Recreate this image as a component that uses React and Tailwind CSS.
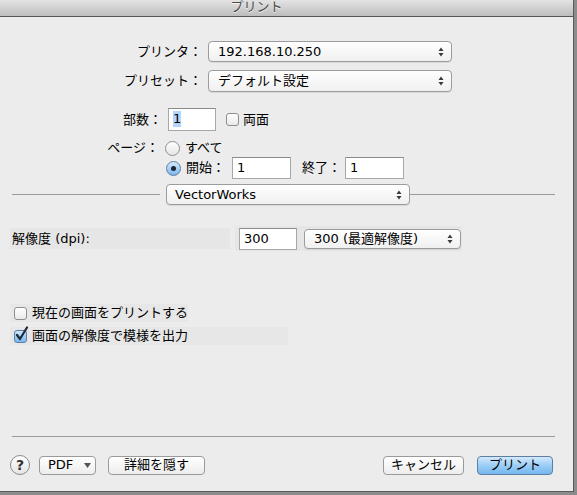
import React from 'react'

const font = "font-['DejaVu_Sans','Noto_Sans_CJK_JP',sans-serif]"

function Arrows() {
  return (
    <svg width="6" height="10" viewBox="0 0 6 10" className="shrink-0">
      <path d="M3 0.5 L5.5 4 L0.5 4 Z" fill="#3a3a3a" />
      <path d="M3 9.5 L5.5 6 L0.5 6 Z" fill="#3a3a3a" />
    </svg>
  )
}

function Popup({ label, className = '', textClass = 'pl-[9px]' }) {
  return (
    <div
      className={`flex items-center justify-between rounded-[4px] border border-[#9c9c9c] bg-gradient-to-b from-[#ffffff] to-[#f0f0f0] shadow-[0_1px_0_rgba(0,0,0,0.08)] pr-[7px] ${className}`}
    >
      <span className={`text-[13px] leading-[16px] text-black ${textClass}`}>{label}</span>
      <Arrows />
    </div>
  )
}

function Field({ value, className = '', selected = false }) {
  return (
    <div className={`bg-white border border-[#a7a7a7] border-t-[#8a8a8a] flex items-start pt-[2px] pl-[4px] ${className}`}>
      <span className={`text-[13px] leading-[16px] text-black ${selected ? 'bg-[#b5d5ff]' : ''}`}>{value}</span>
    </div>
  )
}

function Check({ checked = false }) {
  if (checked) {
    return (
      <div className="relative w-[13px] h-[13px] shrink-0">
        <div className="w-[13px] h-[13px] rounded-[3px] border border-[#5a7ea5] bg-gradient-to-b from-[#cfe6fb] to-[#7ab6ec]" />
        <svg width="14" height="16" viewBox="0 0 14 16" className="absolute left-[1px] top-[-4px]">
          <path d="M2 9 L5 13 L12 1.5" fill="none" stroke="#1b2a3c" strokeWidth="2.2" strokeLinecap="round" strokeLinejoin="round" />
        </svg>
      </div>
    )
  }
  return (
    <div className="w-[13px] h-[13px] rounded-[3px] border border-[#8e8e8e] bg-gradient-to-b from-[#ffffff] to-[#e9e9e9] shrink-0" />
  )
}

function Radio({ checked = false }) {
  if (checked) {
    return (
      <div className="w-[15px] h-[15px] rounded-full border border-[#5a7ea5] bg-gradient-to-b from-[#d6ebfc] to-[#7ab6ec] flex items-center justify-center shrink-0">
        <div className="w-[5px] h-[5px] rounded-full bg-[#1b2533]" />
      </div>
    )
  }
  return (
    <div className="w-[15px] h-[15px] rounded-full border border-[#8e8e8e] bg-gradient-to-b from-[#ffffff] to-[#e6e6e6] shrink-0" />
  )
}

function Button({ children, className = '', primary = false }) {
  return (
    <div
      className={`h-[19px] rounded-[4px] border flex items-center justify-center text-[13px] leading-[16px] text-black ${
        primary
          ? 'border-[#5e7fa3] bg-gradient-to-b from-[#d3e9fc] via-[#9ccdf5] to-[#72b7f0]'
          : 'border-[#9a9a9a] bg-gradient-to-b from-[#ffffff] to-[#ededed]'
      } ${className}`}
    >
      {children}
    </div>
  )
}

export default function App() {
  return (
    <div className={`w-[577px] h-[495px] bg-[#8c8c8c] overflow-hidden ${font}`}>
      <div className="w-[574px] h-[492px] bg-[#ececec] border-r border-b border-[#5a5a5a] flex flex-col">
        {/* Title bar */}
        <div className="h-[17px] shrink-0 bg-gradient-to-b from-[#e4e4e4] to-[#bdbdbd] border-b border-[#555555] flex items-center justify-center">
          <span className="text-[13px] leading-[14px] text-[#4a4a4a] [text-shadow:0_1px_0_#f2f2f2] -mt-[3px] ml-[-60px]">プリント</span>
        </div>

        {/* Printer / preset */}
        <div className="flex items-center mt-[24px] h-[21px]">
          <div className="w-[208px] text-right text-[13px] leading-[16px] pr-[6px]">プリンタ：</div>
          <Popup label="192.168.10.250" className="w-[244px] h-[21px]" />
        </div>
        <div className="flex items-center mt-[8px] h-[22px]">
          <div className="w-[208px] text-right text-[13px] leading-[16px] pr-[6px]">プリセット：</div>
          <Popup label="デフォルト設定" className="w-[244px] h-[22px]" />
        </div>

        {/* Copies */}
        <div className="flex items-center mt-[16px] h-[23px]">
          <div className="w-[168px] text-right text-[13px] leading-[16px] pr-[6px]">部数：</div>
          <Field value="1" selected className="w-[48px] h-[23px]" />
          <div className="ml-[10px] flex items-center gap-[4px]">
            <Check />
            <span className="text-[13px] leading-[16px]">両面</span>
          </div>
        </div>

        {/* Pages */}
        <div className="flex items-center mt-[9px] h-[16px]">
          <div className="w-[165px] text-right text-[13px] leading-[16px] pr-[6px]">ページ：</div>
          <Radio />
          <span className="ml-[5px] text-[13px] leading-[16px]">すべて</span>
        </div>
        <div className="flex items-center mt-[1px] h-[22px]">
          <div className="w-[166px]" />
          <Radio checked />
          <span className="ml-[5px] w-[46px] text-[13px] leading-[16px]">開始：</span>
          <Field value="1" className="w-[59px] h-[22px]" />
          <span className="ml-[11px] w-[43px] text-[13px] leading-[16px]">終了：</span>
          <Field value="1" className="w-[59px] h-[22px]" />
        </div>

        {/* Plugin selector */}
        <div className="flex items-center mt-[5px] h-[21px]">
          <div className="ml-[12px] w-[148px] h-px bg-[#9a9a9a]" />
          <Popup label="VectorWorks" className="ml-[6px] w-[244px] h-[21px]" textClass="pl-[8px]" />
          <div className="w-[145px] h-px bg-[#9a9a9a]" />
        </div>

        {/* Resolution */}
        <div className="flex items-center mt-[21px] h-[25px] ml-[10px]">
          <div className="w-[220px] h-[21px] bg-[#e6e6e6] flex items-center">
            <span className="ml-[2px] text-[13px] leading-[16px]">解像度 (dpi):</span>
          </div>
          <div className="ml-[5px] h-[25px] w-[66px] bg-[#e6e6e6] flex items-center justify-center">
            <Field value="300" className="w-[58px] h-[22px]" />
          </div>
          <div className="h-[25px] w-[161px] bg-[#e6e6e6] flex items-center pl-[3px]">
            <Popup label="300  (最適解像度)" className="w-[157px] h-[20px]" />
          </div>
        </div>

        {/* Options */}
        <div className="mt-[53px] ml-[10px] flex flex-col gap-[5px]">
          <div className="w-[178px] h-[18px] bg-[#e7e7e7] flex items-center">
            <div className="ml-[4px]"><Check /></div>
            <span className="ml-[5px] text-[13px] leading-[16px]">現在の画面をプリントする</span>
          </div>
          <div className="w-[278px] h-[18px] bg-[#e7e7e7] flex items-center">
            <div className="ml-[4px]"><Check checked /></div>
            <span className="ml-[5px] text-[13px] leading-[16px]">画面の解像度で模様を出力</span>
          </div>
        </div>

        <div className="flex-1" />

        {/* Bottom */}
        <div className="ml-[12px] w-[543px] h-px bg-[#9a9a9a]" />
        <div className="flex items-center mt-[18px] mb-[16px] h-[20px]">
          <div className="ml-[10px] w-[20px] h-[20px] rounded-full border border-[#8a8a8a] bg-gradient-to-b from-[#ffffff] to-[#e4e4e4] flex items-center justify-center">
            <span className="text-[14px] leading-[14px] font-bold text-[#333]">?</span>
          </div>
          <Button className="ml-[9px] w-[57px] justify-start pl-[8px] gap-[11px]">
            <span>PDF</span>
            <svg width="7" height="5" viewBox="0 0 7 5"><path d="M0 0 L7 0 L3.5 5 Z" fill="#555" /></svg>
          </Button>
          <Button className="ml-[12px] w-[97px]">詳細を隠す</Button>
          <div className="flex-1" />
          <Button className="w-[81px]">キャンセル</Button>
          <Button primary className="ml-[13px] mr-[20px] w-[76px]">プリント</Button>
        </div>
      </div>
    </div>
  )
}
